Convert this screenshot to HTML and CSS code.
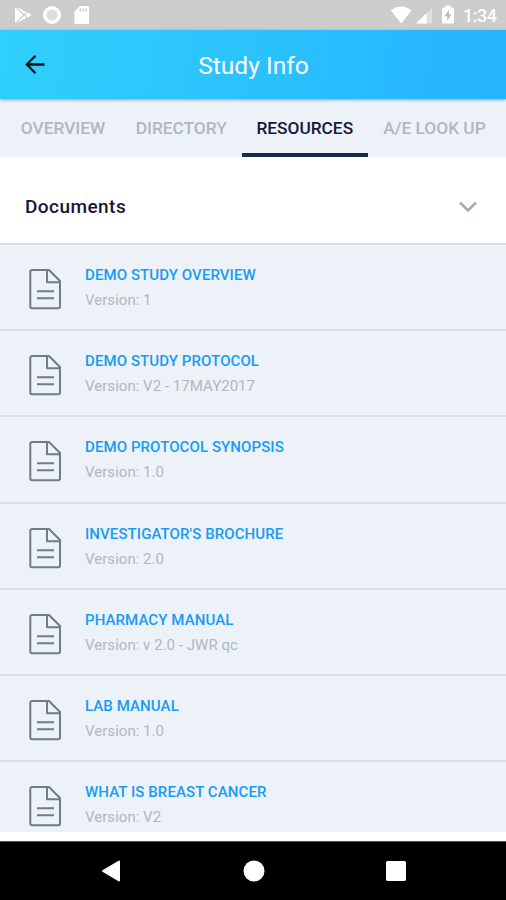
FILE: index.html
```html
<!DOCTYPE html>
<html lang="en">
<head>
<meta charset="utf-8">
<title>Study Info</title>
<link rel="stylesheet" href="styles.css">
</head>
<body>
<svg class="defs" width="0" height="0" aria-hidden="true">
  <symbol id="doc" viewBox="0 0 32 41">
    <path d="M3 1H20L31 12V37.500a1.700 1.700 0 0 1-1.700 1.700H3a1.700 1.700 0 0 1-1.700-1.700V2.700A1.700 1.700 0 0 1 3 1ZM18 1.200V13.300H30.800M8 22.300H25M8 29.300H25" fill="none" stroke="#727a8c" stroke-width="2" stroke-linejoin="round"/>
  </symbol>
</svg>
<div class="screen">
  <div class="status">
    <svg class="status-left" width="80" height="20" viewBox="0 0 80 20" fill="#fff">
      <path d="M1 2v16L9 10ZM2.500 2 13 7.600 10.200 9.200ZM2.500 18 13 12.400 10.200 10.800ZM13.800 7.600 17.500 10 13.800 12.400 11.300 10Z"/>
      <circle cx="38" cy="10" r="7.300" fill="#dedede" stroke="#fff" stroke-width="3.400"/>
      <path d="M66 1h7.500a1.600 1.600 0 0 1 1.600 1.600v14.800a1.600 1.600 0 0 1-1.600 1.600H62a1.600 1.600 0 0 1-1.600-1.600V6.500Z"/>
      <path d="M66.300 3.500v3M69.300 3.500v3M72.300 3.500v3" stroke="#ccc" stroke-width="1.500"/>
    </svg>
    <div class="status-right">
      <svg width="66" height="20" viewBox="0 0 66 20" fill="#fff">
        <path d="M.8 5.200Q11.200-2.400 21.600 5.200L11.200 18.500Z"/>
        <path d="M42 3v15.500H26Z" opacity=".4"/>
        <path d="M36.500 8.300v10.200H26Z"/>
        <path d="M53 2.500h2.500V.5h5v2H63a1 1 0 0 1 1 1V17.500a1 1 0 0 1-1 1H53a1 1 0 0 1-1-1V3.500a1 1 0 0 1 1-1Z"/>
        <path d="M59.300 4.500 54.500 11.200h2.700v4.600L61.600 9.200h-2.700Z" fill="#bbb"/>
      </svg>
      <span class="time">1:34</span>
    </div>
  </div>
  <header class="appbar">
    <svg class="back" width="22" height="22" viewBox="0 0 22 22"><path d="M20.500 10.500H3M11.500 1.800 2.800 10.500l8.700 8.700" fill="none" stroke="#07131c" stroke-width="2.300"/></svg>
    <h1>Study Info</h1>
  </header>
  <nav class="tabs">
    <a class="tab overview"><span>OVERVIEW</span></a>
    <a class="tab directory"><span>DIRECTORY</span></a>
    <a class="tab resources active"><span>RESOURCES</span></a>
    <a class="tab lookup"><span>A/E LOOK UP</span></a>
  </nav>
  <section class="section-head">
    <h2>Documents</h2>
    <svg width="20" height="14" viewBox="0 0 20 14"><path d="M2 2.500 10 10.500 18 2.500" fill="none" stroke="#a6abbc" stroke-width="2.600"/></svg>
  </section>
  <ul class="docs">
    <li><svg class="icon"><use href="#doc"/></svg><div><h3>DEMO STUDY OVERVIEW</h3><p>Version: 1</p></div></li>
    <li><svg class="icon"><use href="#doc"/></svg><div><h3>DEMO STUDY PROTOCOL</h3><p>Version: V2 - 17MAY2017</p></div></li>
    <li><svg class="icon"><use href="#doc"/></svg><div><h3>DEMO PROTOCOL SYNOPSIS</h3><p>Version: 1.0</p></div></li>
    <li><svg class="icon"><use href="#doc"/></svg><div><h3>INVESTIGATOR'S BROCHURE</h3><p>Version: 2.0</p></div></li>
    <li><svg class="icon"><use href="#doc"/></svg><div><h3>PHARMACY MANUAL</h3><p>Version: v 2.0 - JWR qc</p></div></li>
    <li><svg class="icon"><use href="#doc"/></svg><div><h3>LAB MANUAL</h3><p>Version: 1.0</p></div></li>
    <li><svg class="icon"><use href="#doc"/></svg><div><h3>WHAT IS BREAST CANCER</h3><p>Version: V2</p></div></li>
  </ul>
  <footer class="navbar">
    <svg width="20" height="24" viewBox="0 0 20 24"><path d="M18 2.500V21.500L2 12Z" fill="#fff" stroke="#fff" stroke-width="2" stroke-linejoin="round"/></svg>
    <svg width="22" height="22" viewBox="0 0 22 22"><circle cx="11" cy="11" r="10.500" fill="#fff"/></svg>
    <svg width="20" height="20" viewBox="0 0 20 20"><rect width="20" height="20" rx="1.500" fill="#fff"/></svg>
  </footer>
</div>
</body>
</html>
```
FILE: styles.css
```css
* { box-sizing: border-box; margin: 0; padding: 0; }
body { font-family: Roboto, sans-serif; background: #fff; }
svg { display: block; flex: none; }
.defs { position: absolute; }
.screen { width: 506px; height: 900px; display: flex; flex-direction: column; overflow: hidden; }
.status { height: 30px; flex: none; background: #ccc; display: flex; justify-content: space-between; align-items: center; padding: 0 9px 0 14px; }
.status-right { display: flex; align-items: center; gap: 7px; }
.time { color: #fff; font-size: 18px; font-weight: 500; line-height: 20px; letter-spacing: -.5px; width: 34px; white-space: nowrap; padding-top: 2px; }
.appbar { height: 69px; flex: none; display: grid; grid-template-columns: 22px 1fr 22px; align-items: center; padding: 0 24px; background: linear-gradient(100deg, #2fd0fb, #26b3ff); box-shadow: 0 1px 3px rgba(60, 80, 100, .5); z-index: 1; }
h1 { color: #fff; font-size: 24.600px; font-weight: 400; line-height: 30px; text-align: center; padding: 3px 0 0 1px; }
.tabs { height: 58px; flex: none; display: flex; background: #edf2f8; padding-left: 5px; }
.tab { display: flex; justify-content: center; padding-top: 19px; font-size: 17.300px; font-weight: 500; line-height: 21px; white-space: nowrap; color: #b1b6c3; border-bottom: 4px solid transparent; }
.overview { width: 116px; }
.directory { width: 120.500px; }
.resources { width: 126.500px; }
.lookup { width: 133px; }
.tab.active { color: #17183b; border-color: #172b4d; }
.section-head { height: 86px; flex: none; display: flex; align-items: center; justify-content: space-between; padding: 13px 28px 0 25px; background: #fff; }
h2 { font-size: 19px; line-height: 24px; font-weight: 500; letter-spacing: .45px; color: #17143b; }
.docs { height: 589px; flex: none; overflow: hidden; list-style: none; background: #edf2f8; }
.docs li { height: 86.200px; display: flex; gap: 24px; border-top: 2px solid #d9dee4; padding: 20px 0 0 29px; }
.icon { width: 32px; height: 41px; margin-top: 4px; }
h3 { font-size: 15px; line-height: 20px; font-weight: 500; letter-spacing: .09px; color: #169cf6; white-space: nowrap; }
p { font-size: 15px; line-height: 20px; margin-top: 5px; color: #b2b6c1; white-space: nowrap; letter-spacing: .03px; }
.navbar { height: 59px; flex: none; margin-top: 9px; background: #000; border-top: 1px solid #555; display: flex; align-items: center; justify-content: space-between; padding: 0 100px 0 101px; }
```
